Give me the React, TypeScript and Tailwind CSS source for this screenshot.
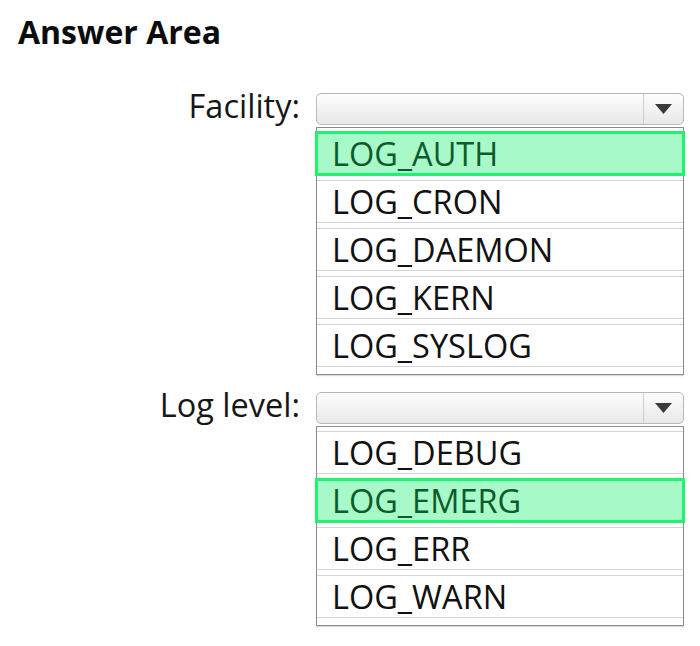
type Field = {
  label: string;
  options: string[];
  picked: string;
};

const fields: Field[] = [
  {
    label: "Facility:",
    options: ["LOG_AUTH", "LOG_CRON", "LOG_DAEMON", "LOG_KERN", "LOG_SYSLOG"],
    picked: "LOG_AUTH",
  },
  {
    label: "Log level:",
    options: ["LOG_DEBUG", "LOG_EMERG", "LOG_ERR", "LOG_WARN"],
    picked: "LOG_EMERG",
  },
];

const Arrow = () => (
  <svg width="17" height="10" viewBox="0 0 17 10" className="block">
    <path d="M0 0 L17 0 L8.5 10 Z" fill="#3a3a3a" />
  </svg>
);

const Dropdown = ({ field }: { field: Field }) => (
  <div className="flex items-start">
    <div className="-mt-[3px] w-[300px] text-right text-[32.5px] leading-[32px] text-[#161616]">
      {field.label}
    </div>
    <div className="ml-[16px] w-[368px]">
      {/* closed select box */}
      <div className="flex h-[32px] rounded-[5px] border border-[#b8b8b8] bg-gradient-to-b from-[#fdfdfd] to-[#e8e8e8]">
        <div className="flex-1" />
        <div className="flex w-[40px] items-center justify-center border-l border-[#cdcdcd]">
          <Arrow />
        </div>
      </div>
      {/* option list */}
      <div className="mt-[2px] flex flex-col gap-[5px] border border-[#8c8c8c] bg-white pt-[4px] pb-[7px] shadow-[0_1px_1px_rgba(0,0,0,0.15)]">
        {field.options.map((opt) =>
          opt === field.picked ? (
            <div
              key={opt}
              className="-mx-[2px] -my-[1px] flex h-[45px] items-center border-[3px] border-[#1ff26e] bg-[#a7f9c7] pt-[2px] pl-[14px] text-[32.5px] text-[#0d5b2d]"
            >
              {opt}
            </div>
          ) : (
            <div
              key={opt}
              className="flex h-[43px] items-center border-y border-[#d4d4d4] pt-[2px] pl-[15px] text-[32.5px] text-[#111111]"
            >
              {opt}
            </div>
          )
        )}
      </div>
    </div>
  </div>
);

export default function App() {
  return (
    <div className="h-[646px] w-[700px] bg-white pt-[12px] pl-[18px] font-['Open_Sans',sans-serif]">
      <h1 className="text-[32px] font-bold leading-[40px] text-[#0c0c0c]">Answer Area</h1>
      <div className="-ml-[18px] mt-[41px] flex flex-col gap-[17px]">
        {fields.map((f) => (
          <Dropdown key={f.label} field={f} />
        ))}
      </div>
    </div>
  );
}
